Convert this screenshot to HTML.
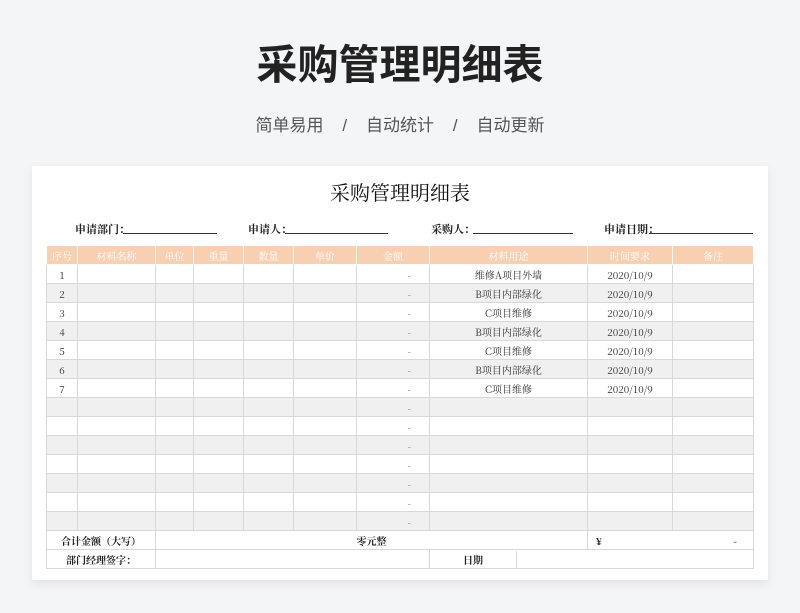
<!DOCTYPE html><html><head><meta charset="utf-8"><style>
*{margin:0;padding:0;box-sizing:border-box}
body{width:800px;height:613px;background:#f4f5f7;position:relative;overflow:hidden;font-family:"Liberation Sans","Noto Sans CJK SC",sans-serif}
.t{position:absolute;left:0;width:800px;text-align:center;top:31px;font-size:41px;font-weight:bold;color:#222}
.s{position:absolute;left:0;width:800px;text-align:center;top:111px;font-size:17px;color:#555}
.card{position:absolute;left:32px;top:166px;width:736px;height:414px;background:#fff;box-shadow:0 4px 10px rgba(0,0,0,.08)}
.ct{position:absolute;left:0;width:800px;top:177px;text-align:center;font-size:20px;font-family:"Noto Serif CJK SC",serif;color:#111}
.f{position:absolute;top:221px;font-size:11px;font-weight:bold;color:#222;font-family:"Noto Serif CJK SC",serif}
.u{position:absolute;top:233px;height:1px;background:#333}
table{position:absolute;left:46px;top:245px;border-collapse:collapse;table-layout:fixed;font-family:"Noto Serif CJK SC",serif;font-size:10px;color:#333}
td{border:1px solid #d8d8d8;height:19px;text-align:center;padding:0;white-space:nowrap;overflow:hidden}
tr.h td{background:#f9cfb2;color:#fff;border-color:#fff;height:19px}
tr.g td{background:#f0f0f0}
td.r{text-align:right;padding-right:18px;color:#777}
tr.b td{font-weight:bold;color:#222}
</style></head><body>
<div class="t">采购管理明细表</div>
<div class="s">简单易用&nbsp;&nbsp;&nbsp;&nbsp;/&nbsp;&nbsp;&nbsp;&nbsp;自动统计&nbsp;&nbsp;&nbsp;&nbsp;/&nbsp;&nbsp;&nbsp;&nbsp;自动更新</div>
<div class="card"></div>
<div class="ct">采购管理明细表</div>
<div class="f" style="left:75px">申请部门：</div><div class="u" style="left:123px;width:94px"></div>
<div class="f" style="left:248px">申请人：</div><div class="u" style="left:285px;width:103px"></div>
<div class="f" style="left:431px">采购人：</div><div class="u" style="left:473px;width:100px"></div>
<div class="f" style="left:604px">申请日期：</div><div class="u" style="left:649px;width:104px"></div>
<table>
<colgroup><col style="width:31px"><col style="width:78px"><col style="width:38px"><col style="width:50px"><col style="width:50px"><col style="width:63px"><col style="width:73px"><col style="width:158px"><col style="width:85px"><col style="width:81px"></colgroup>
<tr class="h"><td>序号</td><td>材料名称</td><td>单位</td><td>重量</td><td>数量</td><td>单价</td><td>金额</td><td>材料用途</td><td>时间要求</td><td>备注</td></tr>
<tr><td>1</td><td></td><td></td><td></td><td></td><td></td><td class="r">-</td><td>维修A项目外墙</td><td>2020/10/9</td><td></td></tr>
<tr class="g"><td>2</td><td></td><td></td><td></td><td></td><td></td><td class="r">-</td><td>B项目内部绿化</td><td>2020/10/9</td><td></td></tr>
<tr><td>3</td><td></td><td></td><td></td><td></td><td></td><td class="r">-</td><td>C项目维修</td><td>2020/10/9</td><td></td></tr>
<tr class="g"><td>4</td><td></td><td></td><td></td><td></td><td></td><td class="r">-</td><td>B项目内部绿化</td><td>2020/10/9</td><td></td></tr>
<tr><td>5</td><td></td><td></td><td></td><td></td><td></td><td class="r">-</td><td>C项目维修</td><td>2020/10/9</td><td></td></tr>
<tr class="g"><td>6</td><td></td><td></td><td></td><td></td><td></td><td class="r">-</td><td>B项目内部绿化</td><td>2020/10/9</td><td></td></tr>
<tr><td>7</td><td></td><td></td><td></td><td></td><td></td><td class="r">-</td><td>C项目维修</td><td>2020/10/9</td><td></td></tr>
<tr class="g"><td></td><td></td><td></td><td></td><td></td><td></td><td class="r">-</td><td></td><td></td><td></td></tr>
<tr><td></td><td></td><td></td><td></td><td></td><td></td><td class="r">-</td><td></td><td></td><td></td></tr>
<tr class="g"><td></td><td></td><td></td><td></td><td></td><td></td><td class="r">-</td><td></td><td></td><td></td></tr>
<tr><td></td><td></td><td></td><td></td><td></td><td></td><td class="r">-</td><td></td><td></td><td></td></tr>
<tr class="g"><td></td><td></td><td></td><td></td><td></td><td></td><td class="r">-</td><td></td><td></td><td></td></tr>
<tr><td></td><td></td><td></td><td></td><td></td><td></td><td class="r">-</td><td></td><td></td><td></td></tr>
<tr class="g"><td></td><td></td><td></td><td></td><td></td><td></td><td class="r">-</td><td></td><td></td><td></td></tr>
<tr class="b"><td colspan="2">合计金额（大写）</td><td colspan="6">零元整</td><td colspan="2" style="text-align:left;padding-left:8px">¥<span style="float:right;margin-right:16px">-</span></td></tr>
<tr class="b"><td colspan="2" style="height:17px">部门经理签字：</td><td colspan="5"></td><td style="border-right:none;padding:0"><div style="width:87px;text-align:center;border-right:1px solid #d8d8d8;height:17px;line-height:17px">日期</div></td><td colspan="2" style="border-left:none"></td></tr>
</table>
</body></html>
